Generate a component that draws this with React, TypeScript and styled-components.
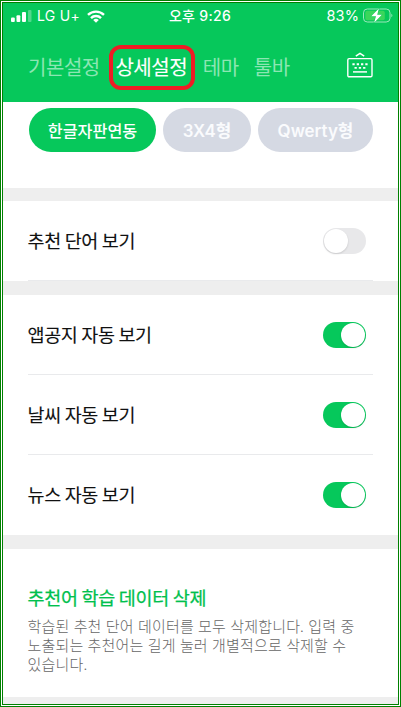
import React from "react";
import styled, { createGlobalStyle } from "styled-components";

const GlobalStyle = createGlobalStyle`
  * { box-sizing: border-box; }
  body {
    margin: 0;
    overflow: hidden;
    background: #fff;
    font-family: "Noto Sans CJK KR", sans-serif;
  }
`;

const GREEN = "#06c85b";

const Screen = styled.div`
  width: 401px;
  height: 707px;
  border: 3px double #008000;
  background: #fff;
  display: flex;
  flex-direction: column;
  overflow: hidden;
`;

const Header = styled.header`
  height: 99px;
  flex: none;
  background: ${GREEN};
  color: #fff;
`;

const StatusBar = styled.div`
  height: 26px;
  display: grid;
  grid-template-columns: 1fr auto 1fr;
  align-items: center;
  padding: 0 5px 0 8px;
  font-family: Inter, "Noto Sans CJK KR", sans-serif;
  font-size: 14px;
  line-height: 26px;
`;

const StatusSide = styled.div<{ $end?: boolean }>`
  display: flex;
  align-items: center;
  gap: ${(p) => (p.$end ? 3 : 6)}px;
  justify-content: ${(p) => (p.$end ? "flex-end" : "flex-start")};
  white-space: nowrap;
`;

const Carrier = styled.span`
  font-size: 14px;
  letter-spacing: 0.3px;
  margin-left: -1px;
  margin-right: 1px;
`;

const Clock = styled.span`
  font-size: 14px;
  font-weight: 500;
  letter-spacing: 0.3px;
  margin-right: 4px;
  white-space: nowrap;
`;

const Percent = styled.span`
  font-size: 14.5px;
  letter-spacing: 0.1px;
`;

const TabBar = styled.nav`
  height: 73px;
  display: flex;
  align-items: center;
  padding: 3px 25px 0 25px;
`;

const Tab = styled.span<{ $active?: boolean; $gap: number }>`
  font-size: 20px;
  line-height: 28px;
  letter-spacing: -0.45px;
  -webkit-text-stroke: ${(p) => (p.$active ? "0.12px #fff" : "0")};
  color: ${(p) => (p.$active ? "#fff" : "#8ce6b3")};
  margin-left: ${(p) => p.$gap}px;
  white-space: nowrap;
`;

const Highlight = styled.div`
  width: 86px;
  height: 45px;
  margin-left: 9px;
  padding-right: 1px;
  display: flex;
  align-items: center;
  justify-content: center;
  border: 4px solid #ee1c25;
  border-radius: 12px;
`;

const KeyboardButton = styled.div`
  display: flex;
  margin-left: auto;
  padding-bottom: 4px;
`;

const ChipRow = styled.div`
  display: flex;
  gap: 7px;
  height: 86px;
  flex: none;
  padding: 6px 0 0 26px;
`;

const Chip = styled.div<{ $width: number; $active?: boolean }>`
  width: ${(p) => p.$width}px;
  height: 44px;
  border-radius: 22px;
  background: ${(p) => (p.$active ? GREEN : "#d5d9e3")};
  color: ${(p) => (p.$active ? "#fff" : "#fafbfd")};
  display: flex;
  align-items: center;
  justify-content: center;
  padding-bottom: 1px;
  font-family: Inter, "Noto Sans CJK KR", sans-serif;
  font-size: ${(p) => (p.$active ? 16.2 : 16.9)}px;
  font-weight: ${(p) => (p.$active ? 500 : 600)};
`;

const Band = styled.div<{ $height: number }>`
  height: ${(p) => p.$height}px;
  flex: none;
  background: #eee;
`;

const List = styled.div`
  flex: none;
  padding: 0 25px;
`;

const Row = styled.div<{ $line?: boolean }>`
  height: 80px;
  display: flex;
  align-items: center;
  justify-content: space-between;
  border-bottom: 1px solid ${(p) => (p.$line ? "#e9eaec" : "transparent")};
`;

const Label = styled.span`
  font-size: 18.5px;
  line-height: 26px;
  letter-spacing: -0.35px;
  margin: 0 0 2px -0.5px;
  color: #111;
  -webkit-text-stroke: 0.12px #111;
`;

const Switch = styled.div<{ $on?: boolean }>`
  width: 43px;
  height: 26px;
  margin-right: 7px;
  border-radius: 13px;
  padding: 1px;
  display: flex;
  justify-content: ${(p) => (p.$on ? "flex-end" : "flex-start")};
  background: ${(p) => (p.$on ? GREEN : "#e8e8ea")};
`;

const Knob = styled.div`
  width: 24px;
  height: 24px;
  border-radius: 12px;
  background: #fff;
  box-shadow: 0 1px 2px rgba(0, 0, 0, 0.14);
`;

const DeleteSection = styled.section`
  height: 148px;
  flex: none;
  padding: 34px 24.5px 0;
`;

const DeleteTitle = styled.h2`
  margin: 0;
  font-size: 18.5px;
  line-height: 28px;
  font-weight: 400;
  letter-spacing: -0.3px;
  color: #00c04d;
  -webkit-text-stroke: 0.25px #00c04d;
`;

const Description = styled.p`
  margin: 5px 0 0;
  font-size: 15px;
  line-height: 19px;
  font-weight: 300;
  letter-spacing: 0.18px;
  word-spacing: 0.7px;
  color: #666;
  white-space: nowrap;
`;

const SignalIcon = () => (
  <svg width="21" height="12" viewBox="0 0 21 12" fill="#fff">
    <rect x="0" y="7.6" width="3.8" height="4.4" rx="1" />
    <rect x="5.5" y="5.2" width="3.8" height="6.8" rx="1" />
    <rect x="11" y="2" width="4" height="10" rx="1" />
    <rect x="17" y="0" width="3.5" height="12" rx="1" opacity="0.3" />
  </svg>
);

const WifiIcon = () => (
  <svg width="18" height="13" viewBox="0 0 18 13" fill="none" stroke="#fff" strokeWidth="2.4">
    <path d="M1 4.9A11.4 11.4 0 0 1 17 4.9" />
    <path d="M4 8.1A7.1 7.1 0 0 1 14 8.1" />
    <path d="M9 12.8L6.2 10.1A4 4 0 0 1 11.8 10.1Z" fill="#fff" stroke="none" />
  </svg>
);

const BatteryIcon = () => (
  <svg width="31" height="16" viewBox="-1 0 31 16">
    <rect x="0.5" y="1" width="26.5" height="13" rx="3.8" fill="none" stroke="#9be8bc" />
    <rect x="2.3" y="2.8" width="19.5" height="9.4" rx="2" fill="#3bd65b" />
    <path d="M28.4 5.7C29.7 6.3 29.7 8.7 28.4 9.3Z" fill="#9be8bc" />
    <path
      d="M15.9 0.5L8.2 8.3H13L11.1 14.8L18.9 6.7H14.2Z"
      fill="#fff"
      stroke={GREEN}
      strokeWidth="0.8"
      paintOrder="stroke"
    />
  </svg>
);

const KeyboardIcon = () => (
  <svg width="26" height="26" viewBox="0 0 26 26" fill="none" stroke="#fff" strokeWidth="1.4">
    <path d="M8.8 4.2L13 1.3L17.2 4.2" strokeWidth="1.5" />
    <rect x="0.8" y="6.6" width="24.2" height="18.2" rx="1.3" />
    <path d="M5.4 12.2H20.8" strokeWidth="1.9" strokeDasharray="2.3 2" />
    <path d="M7.5 15.9H18.6" strokeWidth="1.9" strokeDasharray="2.3 2" />
    <path d="M6 19.9H20" strokeWidth="1.5" />
  </svg>
);

const Toggle = ({ on }: { on?: boolean }) => (
  <Switch $on={on}>
    <Knob />
  </Switch>
);

const autoRows = ["앱공지 자동 보기", "날씨 자동 보기", "뉴스 자동 보기"];

export default function App() {
  return (
    <>
      <GlobalStyle />
      <Screen>
        <Header>
          <StatusBar>
            <StatusSide>
              <SignalIcon />
              <Carrier>LG U+</Carrier>
              <WifiIcon />
            </StatusSide>
            <Clock>오후 9:26</Clock>
            <StatusSide $end>
              <Percent>83%</Percent>
              <BatteryIcon />
            </StatusSide>
          </StatusBar>
          <TabBar>
            <Tab $gap={0}>기본설정</Tab>
            <Highlight>
              <Tab $active $gap={0}>상세설정</Tab>
            </Highlight>
            <Tab $gap={8}>테마</Tab>
            <Tab $gap={15}>툴바</Tab>
            <KeyboardButton>
              <KeyboardIcon />
            </KeyboardButton>
          </TabBar>
        </Header>
        <ChipRow>
          <Chip $width={127} $active>한글자판연동</Chip>
          <Chip $width={88}>3X4형</Chip>
          <Chip $width={115}>Qwerty형</Chip>
        </ChipRow>
        <Band $height={13} />
        <List>
          <Row $line>
            <Label>추천 단어 보기</Label>
            <Toggle />
          </Row>
        </List>
        <Band $height={14} />
        <List>
          {autoRows.map((text, i) => (
            <Row key={text} $line={i < autoRows.length - 1}>
              <Label>{text}</Label>
              <Toggle on />
            </Row>
          ))}
        </List>
        <Band $height={14} />
        <DeleteSection>
          <DeleteTitle>추천어 학습 데이터 삭제</DeleteTitle>
          <Description>
            학습된 추천 단어 데이터를 모두 삭제합니다. 입력 중<br />
            노출되는 추천어는 길게 눌러 개별적으로 삭제할 수<br />
            있습니다.
          </Description>
        </DeleteSection>
        <Band $height={7} />
      </Screen>
    </>
  );
}
